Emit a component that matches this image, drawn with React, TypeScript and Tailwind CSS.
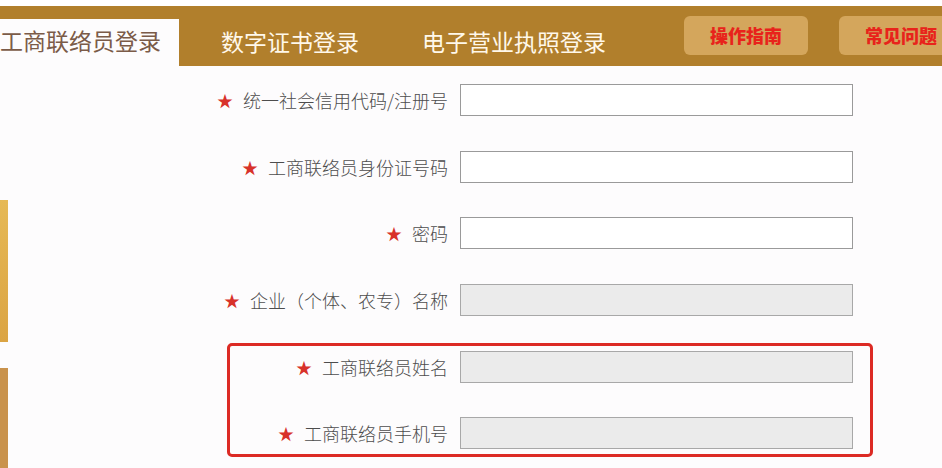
import React from 'react'

const font = { fontFamily: '"Noto Sans CJK SC", "Noto Sans", sans-serif' }

interface FieldProps {
  label: string
  labelWidth: string
  disabled?: boolean
}

const Field: React.FC<FieldProps> = ({ label, labelWidth, disabled }) => (
  <div className="flex items-center h-[32px]">
    <div className={`${labelWidth} shrink-0 flex items-center justify-end gap-[10px] pr-[12px]`}>
      <span className="text-[#d8322a] text-[16px] leading-none">★</span>
      <span className="text-[18px] font-light text-[#4d4d4d] leading-none whitespace-nowrap">{label}</span>
    </div>
    <input
      type="text"
      disabled={disabled}
      className={`w-[393px] shrink-0 h-[32px] border border-[#9a9a9a] outline-none ${
        disabled ? 'bg-[#ebebeb] border-[#a8a8a8]' : 'bg-white'
      }`}
    />
  </div>
)

export default function App() {
  return (
    <div className="w-[942px] h-[468px] overflow-hidden bg-[#fdfcfd]" style={font}>
      {/* 顶部导航 */}
      <div className="h-[6px] bg-white" />
      <div className="h-[60px] bg-[#b17f2c] flex items-end">
        <div className="w-[179px] shrink-0 h-[47px] bg-[#fdfcfd] flex items-center">
          <span className="text-[23px] text-[#7b5b48] leading-none pb-[4px] whitespace-nowrap">工商联络员登录</span>
        </div>
        <div className="h-full shrink-0 flex items-center ml-[42px]">
          <span className="text-[23px] text-[#fff8ea] leading-none pt-[10px] whitespace-nowrap">数字证书登录</span>
        </div>
        <div className="h-full shrink-0 flex items-center ml-[63px]">
          <span className="text-[23px] text-[#fff8ea] leading-none pt-[10px] whitespace-nowrap">电子营业执照登录</span>
        </div>
        <div className="h-full shrink-0 flex items-start pt-[10px] ml-[78px] gap-[31px]">
          <div className="w-[124px] h-[39px] rounded-[6px] bg-[#d4a65c] flex items-center justify-center">
            <span className="text-[18px] font-black text-[#e8231b] whitespace-nowrap">操作指南</span>
          </div>
          <div className="w-[124px] h-[39px] rounded-[6px] bg-[#d4a65c] flex items-center pl-[26px]">
            <span className="text-[18px] font-black text-[#e8231b] whitespace-nowrap">常见问题</span>
          </div>
        </div>
      </div>

      {/* 主体 */}
      <div className="flex">
        <div className="w-[8px] shrink-0 flex flex-col">
          <div className="mt-[134px] h-[142px] bg-gradient-to-b from-[#e6b955] to-[#dba443]" />
          <div className="mt-[26px] h-[100px] bg-[#c9924c]" />
        </div>
        <div className="flex flex-col pt-[18px]">
          <div className="flex flex-col gap-[34.6px]">
            <Field label="统一社会信用代码/注册号" labelWidth="w-[452px]" />
            <Field label="工商联络员身份证号码" labelWidth="w-[452px]" />
            <Field label="密码" labelWidth="w-[452px]" />
            <Field label="企业（个体、农专）名称" labelWidth="w-[452px]" disabled />
          </div>
          <div className="mt-[27px] ml-[219px] w-[646px] border-[3px] border-[#dc2a24] rounded-[5px] pt-[5px] pb-[5px] flex flex-col gap-[34px]">
            <Field label="工商联络员姓名" labelWidth="w-[230px]" disabled />
            <Field label="工商联络员手机号" labelWidth="w-[230px]" disabled />
          </div>
        </div>
      </div>
    </div>
  )
}
